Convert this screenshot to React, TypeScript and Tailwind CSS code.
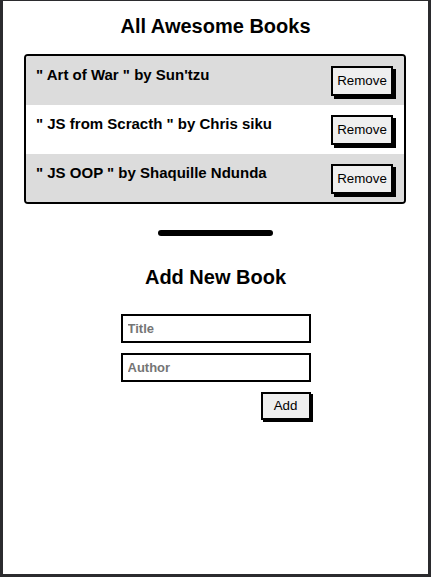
import { useState } from "react";

interface Book {
  id: number;
  title: string;
  author: string;
}

const initialBooks: Book[] = [
  { id: 1, title: "Art of War", author: "Sun'tzu" },
  { id: 2, title: "JS from Scracth", author: "Chris siku" },
  { id: 3, title: "JS OOP", author: "Shaquille Ndunda" },
];

export default function App() {
  const [books, setBooks] = useState<Book[]>(initialBooks);
  const [title, setTitle] = useState("");
  const [author, setAuthor] = useState("");

  const addBook = () => {
    if (!title.trim() || !author.trim()) return;
    setBooks((prev) => [...prev, { id: Date.now(), title, author }]);
    setTitle("");
    setAuthor("");
  };

  return (
    <div
      className="h-[577px] w-[431px] bg-[#2b2b2e] pt-px pl-[3px] pr-[3px] pb-[3px]"
      style={{ fontFamily: '"Liberation Sans", Arial, sans-serif' }}
    >
      <div className="h-full bg-white flex flex-col items-center">
        <h1 className="mt-[14px] text-[20px] leading-[23px] font-bold text-black">
          All Awesome Books
        </h1>

        <ul className="mt-[16px] w-[382px] self-start ml-[21px] border-2 border-black rounded-[4px] overflow-hidden">
          {books.map((book, i) => (
            <li
              key={book.id}
              className={`flex justify-between items-start pl-[10px] pr-[11px] pt-[10px] ${
                i === books.length - 1 ? "h-[48px]" : "h-[49px]"
              } ${i % 2 === 0 ? "bg-[#dcdcdc]" : "bg-white"}`}
            >
              <p className="text-[15px] leading-[17px] font-bold text-black">
                " {book.title} " by {book.author}
              </p>
              <button
                className="h-[30px] w-[62px] border-2 border-black bg-[#efefef] text-[13.33px] text-black shadow-[3px_3px_0_#000]"
                onClick={() => setBooks((prev) => prev.filter((b) => b.id !== book.id))}
              >
                Remove
              </button>
            </li>
          ))}
        </ul>

        <div className="mt-[26px] h-[6px] w-[115px] rounded-full bg-black" />

        <h2 className="mt-[30px] text-[20px] leading-[23px] font-bold text-black">
          Add New Book
        </h2>

        <div className="mt-[25px] flex w-[190px] flex-col items-end gap-[10px]">
          <input
            className="h-[29px] w-full border-2 border-black pl-[5px] text-[13px] font-bold text-black placeholder:text-[#757575] outline-none"
            placeholder="Title"
            value={title}
            onChange={(e) => setTitle(e.target.value)}
          />
          <input
            className="h-[29px] w-full border-2 border-black pl-[5px] text-[13px] font-bold text-black placeholder:text-[#757575] outline-none"
            placeholder="Author"
            value={author}
            onChange={(e) => setAuthor(e.target.value)}
          />
          <button
            className="h-[28px] w-[50px] border-2 border-black bg-[#efefef] text-[13.33px] text-black shadow-[2px_2px_0_#000]"
            onClick={addBook}
          >
            Add
          </button>
        </div>
      </div>
    </div>
  );
}
